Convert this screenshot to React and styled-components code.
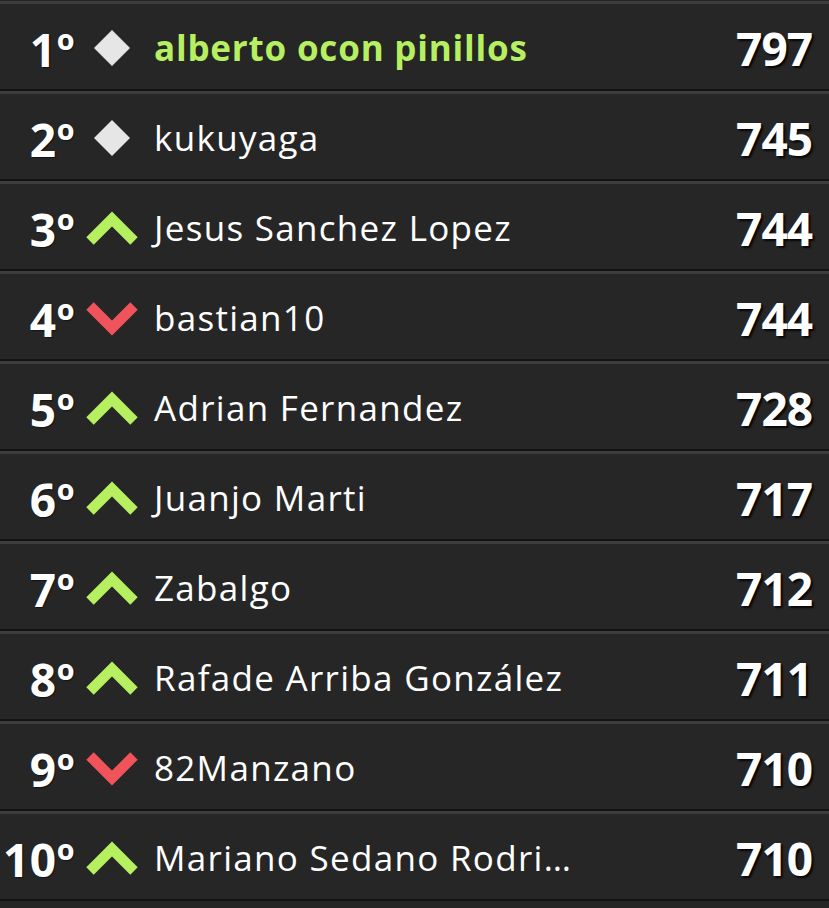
import React from 'react';
import styled, { createGlobalStyle } from 'styled-components';

const GlobalStyle = createGlobalStyle`
  html, body {
    margin: 0;
    padding: 0;
    background: #252525;
  }
  body {
    font-family: "Open Sans", "DejaVu Sans", sans-serif;
    color: #fff;
  }
`;

const players = [
    { pos: 1, trend: 'same', name: 'alberto ocon pinillos', points: 797, me: true },
    { pos: 2, trend: 'same', name: 'kukuyaga', points: 745 },
    { pos: 3, trend: 'up', name: 'Jesus Sanchez Lopez', points: 744 },
    { pos: 4, trend: 'down', name: 'bastian10', points: 744 },
    { pos: 5, trend: 'up', name: 'Adrian Fernandez', points: 728 },
    { pos: 6, trend: 'up', name: 'Juanjo Marti', points: 717 },
    { pos: 7, trend: 'up', name: 'Zabalgo', points: 712 },
    { pos: 8, trend: 'up', name: 'Rafade Arriba González', points: 711 },
    { pos: 9, trend: 'down', name: '82Manzano', points: 710 },
    { pos: 10, trend: 'up', name: 'Mariano Sedano Rodriguez', points: 710 },
];

const TrendIcon = ({ trend }) => {
    if (trend === 'same') {
        return (
            <svg width="52" height="36" viewBox="0 0 52 36">
                <polygon points="26,0 44,18 26,36 8,18" fill="#e6e6e6" />
            </svg>
        );
    }
    const up = trend === 'up';
    return (
        <svg width="52" height="36" viewBox="0 0 52 36">
            <polyline
                points={up ? '4,31 26,9 48,31' : '4,6 26,28 48,6'}
                fill="none"
                stroke={up ? '#b6f060' : '#f0535b'}
                strokeWidth="10.5"
                strokeLinejoin="miter"
                strokeLinecap="butt"
            />
        </svg>
    );
};

const App = () => {
    return (
        <>
            <GlobalStyle />
            <Ranking>
                {players.map(p => (
                    <Row key={p.pos}>
                        <Position>{p.pos}º</Position>
                        <Trend>
                            <TrendIcon trend={p.trend} />
                        </Trend>
                        <Name me={p.me}>{p.name}</Name>
                        <Points>{p.points}</Points>
                    </Row>
                ))}
            </Ranking>
        </>
    );
};

export default App;

const Ranking = styled.div`
width: 829px;
display: flex;
flex-direction: column;
`;

const Row = styled.div`
box-sizing: border-box;
height: 90px;
display: grid;
grid-template-columns: 78px 68px 433px 1fr;
align-items: center;
border-top: 3px solid #3c3c3c;
border-bottom: 2px solid #131313;
background: #262626;
&:first-child {
  margin-top: 1px;
}
`;

const Position = styled.div`
text-align: right;
font-size: 46px;
font-weight: 700;
letter-spacing: 0.5px;
padding-right: 3px;
padding-top: 4px;
text-shadow: 1px 1px 1px rgba(0, 0, 0, 0.5);
`;

const Trend = styled.div`
display: flex;
justify-content: center;
align-items: center;
padding-top: 2px;
`;

const Name = styled.div`
padding-left: 8px;
padding-top: 2px;
font-size: 35px;
letter-spacing: ${props => props.me ? '0.8px' : '1.3px'};
font-weight: ${props => props.me ? 700 : 400};
color: ${props => props.me ? '#b6f060' : '#fff'};
white-space: nowrap;
overflow: hidden;
text-overflow: ellipsis;
`;

const Points = styled.div`
text-align: right;
padding-right: 17px;
padding-top: 2px;
font-size: 46px;
font-weight: 700;
letter-spacing: -1px;
text-shadow: 2px 2px 2px rgba(0, 0, 0, 0.85);
`;
